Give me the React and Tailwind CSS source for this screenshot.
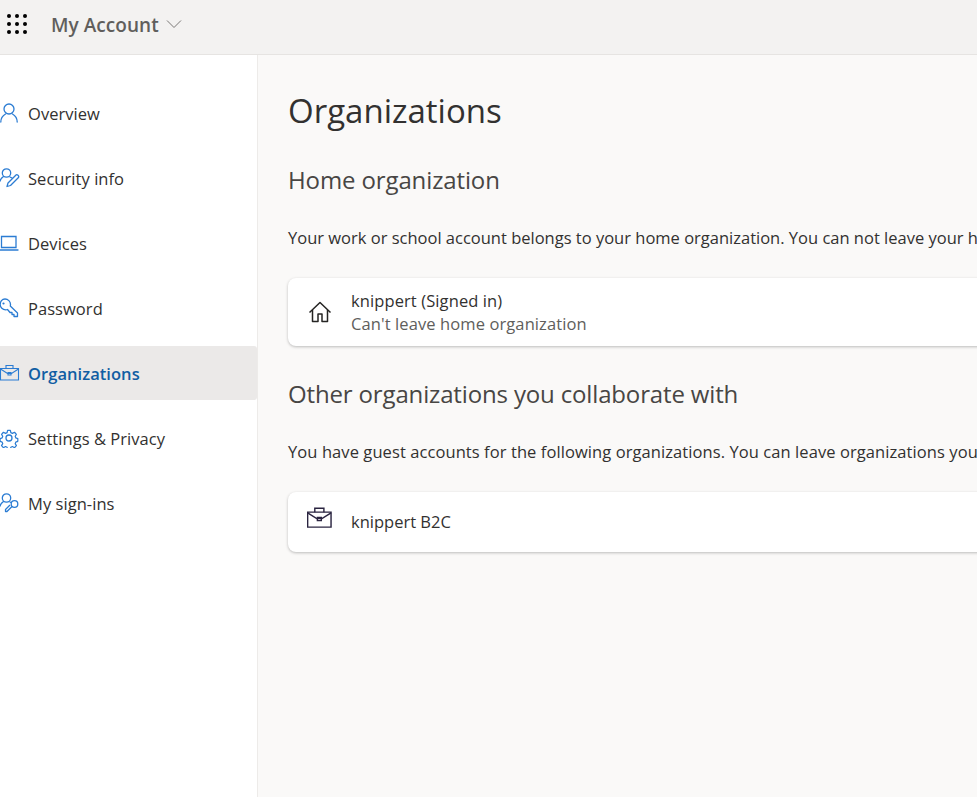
import React from 'react';

const blue = '#2b7cd3';

const PersonIcon = () => (
  <svg width="20" height="20" viewBox="0 0 20 20" fill="none" stroke={blue} strokeWidth="1.3">
    <circle cx="9" cy="6" r="5" />
    <path d="M.8 19c0-4 3-7 4.700-8M17.200 19c0-4-3-7-4.700-8" strokeLinecap="round" />
  </svg>
);

const SecurityIcon = () => (
  <svg width="20" height="20" viewBox="0 0 20 20" fill="none" stroke={blue} strokeWidth="1.3">
    <circle cx="6.5" cy="5" r="4.2" />
    <path d="M0 13c.5-2 2-3.5 3.5-4.5M10 9l2 1" strokeLinecap="round" />
    <path d="M7 18.5l1-3.5 8-8c1-1 3.5 1 2.5 2.5l-8 8z" strokeLinejoin="round" />
  </svg>
);

const LaptopIcon = () => (
  <svg width="20" height="20" viewBox="0 0 20 20" fill="none" stroke={blue} strokeWidth="1.3">
    <path d="M1.5 3.5h14.500v11h-14.500z" />
    <path d="M0 17h18" strokeLinecap="round" />
  </svg>
);

const KeyIcon = () => (
  <svg width="20" height="20" viewBox="0 0 20 20" fill="none" stroke={blue} strokeWidth="1.3">
    <path d="M5 1c3 0 5.5 2.5 5.5 5.5 0 .6-.1 1-.2 1.5l7.200 7v3.500h-3.500v-2h-2v-2h-2l-2.500-3c-.6.2-1.200.3-1.800.3-3 0-5.500-2.300-5.500-5.300S2 1 5 1z" strokeLinejoin="round" />
    <circle cx="3.5" cy="5.5" r="1.1" fill={blue} stroke="none" />
  </svg>
);

const BriefcaseIcon = ({ color = blue, width = 20, height = 20 }) => (
  <svg width={width} height={height} viewBox="0 0 20 20" fill="none" stroke={color} strokeWidth="1.1">
    <path d="M0.5 5.5h18v11.500h-18z" />
    <path d="M6 5.5v-3h7v3" />
    <path d="M0.5 6l7 4.500h4l7-4.500" />
    <path d="M8 9.5h3v2.500h-3z" />
  </svg>
);

const GearIcon = () => (
  <svg width="20" height="20" viewBox="0 0 20 20" fill="none" stroke={blue} strokeWidth="1.3">
    <circle cx="9" cy="10" r="3" />
    <path d="M7.5 1.5h3l.5 2.500 1.700.8 2.300-1.200 2 2.200-1.300 2.200.6 1.600 2.200.8v3l-2.200.8-.6 1.600 1.300 2.200-2 2.200-2.300-1.200-1.700.8-.5 2.300h-3l-.5-2.300-1.700-.8-2.300 1.200-2-2.200 1.300-2.200-.6-1.600-2.200-.8v-3l2.200-.8.6-1.600-1.300-2.200 2-2.200 2.300 1.200 1.700-.8z" strokeLinejoin="round" transform="translate(.6 .9) scale(.93)" />
  </svg>
);

const SignInsIcon = () => (
  <svg width="20" height="20" viewBox="0 0 20 20" fill="none" stroke={blue} strokeWidth="1.3">
    <circle cx="6.5" cy="5" r="4.2" />
    <path d="M0 13c.5-2 2-3.500 3.500-4.500M10 9l1 .5" strokeLinecap="round" />
    <circle cx="14.5" cy="11" r="3.3" />
    <path d="M12 13.500l-5 5h-1.500v-2l4.500-4.500" strokeLinejoin="round" />
  </svg>
);

const HomeIcon = () => (
  <svg width="24" height="24" viewBox="0 0 24 24" fill="none" stroke="#252423" strokeWidth="1.5">
    <path d="M1.5 12.500l10.500-10 10.500 10" strokeLinejoin="round" />
    <path d="M4.5 10v11.500h5.500v-7.500h4v7.500h5.500v-11.500" strokeLinejoin="round" />
  </svg>
);

const navItems = [
  { label: 'Overview', icon: <PersonIcon /> },
  { label: 'Security info', icon: <SecurityIcon /> },
  { label: 'Devices', icon: <LaptopIcon /> },
  { label: 'Password', icon: <KeyIcon /> },
  { label: 'Organizations', icon: <BriefcaseIcon />, active: true },
  { label: 'Settings & Privacy', icon: <GearIcon /> },
  { label: 'My sign-ins', icon: <SignInsIcon /> },
];

const App = () => {
  return (
    <div className="h-[797px] w-[977px] overflow-hidden bg-[#faf9f8] font-['Open_Sans',sans-serif] text-[#323130]">
      <header className="h-[55px] bg-[#f3f2f1] border-b border-[#e6e4e2] flex items-center pl-[7px]">
        <div className="grid grid-cols-3 gap-x-[4px] gap-y-[4px] mb-[7px]">
          {Array.from({ length: 9 }).map((_, i) => (
            <span key={i} className="w-[4px] h-[4px] rounded-full bg-black" />
          ))}
        </div>
        <span className="ml-[24px] text-[19px] font-semibold text-[#605e5c] tracking-[0.05px] mb-[3px]">My Account</span>
        <svg className="ml-[7px] mb-[7px]" width="16" height="10" viewBox="0 0 16 10" fill="none" stroke="#7a7876" strokeWidth="1">
          <path d="M1 1.5l7 7 7-7" />
        </svg>
      </header>

      <div className="flex h-[742px]">
        <nav className="w-[258px] shrink-0 bg-white border-r border-[#edebe9] pt-[31px]">
          <ul className="flex flex-col gap-[11px]">
            {navItems.map((item) => (
              <li
                key={item.label}
                className={`h-[54px] flex items-center rounded-r-[3px] ${item.active ? 'bg-[#ebe9e8] text-[#115ea3] font-semibold' : ''}`}
              >
                <span className="w-[28px] shrink-0">{item.icon}</span>
                <span className="text-[16.5px] leading-[24px] tracking-[0.05px] mt-[1px]">{item.label}</span>
              </li>
            ))}
          </ul>
        </nav>

        <main className="flex-1 min-w-0 pl-[30px] pt-[31px] overflow-hidden">
          <h1 className="text-[33px] leading-[50px] text-[#323130]">Organizations</h1>
          <h2 className="mt-[29px] text-[24px] leading-[30px] tracking-[-0.12px] text-[#484644]">Home organization</h2>
          <p className="mt-[31px] text-[16.5px] leading-[24px] whitespace-nowrap">
            Your work or school account belongs to your home organization. You can not leave your home organization.
          </p>
          <div className="mt-[28px] h-[68px] w-[760px] bg-white rounded-[8px] shadow-[0_1px_3px_rgba(0,0,0,0.25)] flex items-center pl-[20px]">
            <HomeIcon />
            <div className="ml-[19px] text-[16.5px] leading-[23px] tracking-[0.1px]">
              <div className="text-[#323130]">knippert (Signed in)</div>
              <div className="text-[#605e5c]">Can't leave home organization</div>
            </div>
          </div>
          <h2 className="mt-[33px] text-[24px] leading-[30px] tracking-[-0.15px] text-[#484644]">Other organizations you collaborate with</h2>
          <p className="mt-[31px] text-[16.5px] leading-[24px] tracking-[0.08px] whitespace-nowrap">
            You have guest accounts for the following organizations. You can leave organizations you no longer collaborate with.
          </p>
          <div className="mt-[28px] h-[60px] w-[760px] bg-white rounded-[8px] shadow-[0_1px_3px_rgba(0,0,0,0.25)] flex items-center pl-[19px]">
            <span className="mb-[9px]">
              <BriefcaseIcon color="#2a2440" width={26} height={26} />
            </span>
            <span className="ml-[18px] text-[16.5px]">knippert B2C</span>
          </div>
        </main>
      </div>
    </div>
  );
};

export default App;
